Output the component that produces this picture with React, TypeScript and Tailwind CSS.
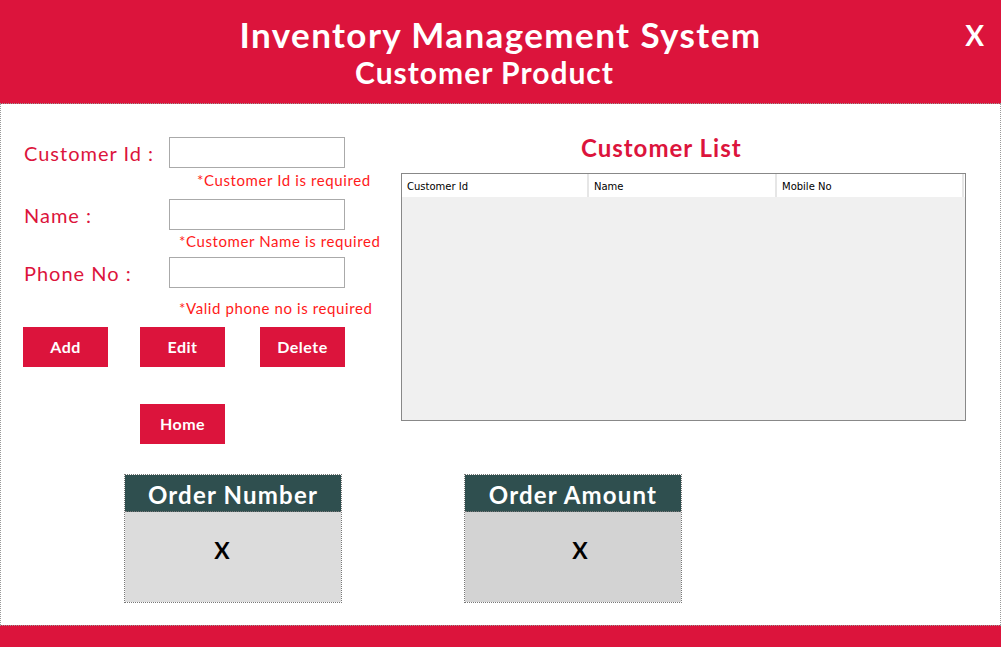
import React from 'react';

const font = { fontFamily: '"Lato", "DejaVu Sans", sans-serif' };

// --- small pieces ---
const Field = ({ label, top }: { label: string; top: string }) => (
  <div className={`flex items-center ${top}`}>
    <label className="w-[168px] pl-[23px] text-[20px] tracking-[1px] text-[#dc143c] whitespace-nowrap">{label}</label>
    <input className="w-[176px] h-[31px] border border-[#aaaaaa] bg-white outline-none" />
  </div>
);

const RedButton = ({ children, className = '' }: { children: React.ReactNode; className?: string }) => (
  <button className={`w-[85px] h-[40px] bg-[#dc143c] text-white font-bold text-[16px] tracking-[0.5px] ${className}`}>
    {children}
  </button>
);

const OrderCard = ({ title, bg, shift }: { title: string; bg: string; shift: string }) => (
  <div className="w-[218px] border border-dotted border-[#777]">
    <div className="h-[37px] bg-[#2f4f4f] text-white font-bold text-[24px] tracking-[1.2px] flex items-center justify-center pt-[3px] border-b border-dotted border-[#777]">
      {title}
    </div>
    <div className={`h-[90px] ${bg} flex items-center justify-center ${shift} pb-[14px] text-[23px] font-bold text-black`}>X</div>
  </div>
);

export default function App() {
  return (
    <div className="w-[1001px] h-[647px] bg-white flex flex-col overflow-hidden" style={font}>
      {/* header */}
      <div className="relative h-[104px] bg-[#dc143c] border-b border-dotted border-[#999] text-white flex flex-col items-center">
        <h1 className="mt-[14px] text-[35px] tracking-[1.4px] font-bold leading-[40px]">Inventory Management System</h1>
        <h2 className="mr-[32px] text-[30px] tracking-[1px] font-bold leading-[36px]">Customer Product</h2>
        <span className="absolute right-[17px] top-[14px] text-[28px] font-bold">X</span>
      </div>

      {/* body */}
      <div className="flex-1 flex flex-col border-x border-dotted border-[#999]">
        <div className="flex">
          {/* left: form */}
          <div className="w-[400px] flex flex-col">
            <Field label="Customer Id :" top="mt-[33px]" />
            <p className="ml-[196px] mt-[2px] text-[15px] tracking-[0.6px] leading-[20px] text-[#ff1a1a]">*Customer Id is required</p>
            <Field label="Name :" top="mt-[9px]" />
            <p className="ml-[178px] mt-[1px] text-[15px] tracking-[0.6px] leading-[20px] text-[#ff1a1a]">*Customer Name is required</p>
            <Field label="Phone No :" top="mt-[6px]" />
            <p className="ml-[178px] mt-[10px] text-[15px] tracking-[0.6px] leading-[20px] text-[#ff1a1a]">*Valid phone no is required</p>
            <div className="flex mt-[9px] pl-[22px]">
              <RedButton>Add</RedButton>
              <RedButton className="ml-[32px]">Edit</RedButton>
              <RedButton className="ml-[35px]">Delete</RedButton>
            </div>
            <div className="mt-[37px] pl-[139px]">
              <RedButton>Home</RedButton>
            </div>
          </div>

          {/* right: customer list */}
          <div className="flex flex-col">
            <h3 className="mt-[29px] ml-[180px] text-[24px] tracking-[1px] font-bold text-[#dc143c] leading-[30px]">
              Customer List
            </h3>
            <div className="mt-[10px] w-[565px] h-[248px] border border-[#888] bg-[#f0f0f0]">
              <div
                className="flex h-[23px] bg-white text-[10px] text-black"
                style={{ fontFamily: '"DejaVu Sans", sans-serif' }}
              >
                <div className="w-[187px] border-r-2 border-[#e6e6e6] flex items-center pl-[5px] pt-[2px]">Customer Id</div>
                <div className="w-[188px] border-r-2 border-[#e6e6e6] flex items-center pl-[5px] pt-[2px]">Name</div>
                <div className="w-[187px] border-r-2 border-[#e6e6e6] flex items-center pl-[5px] pt-[2px]">Mobile No</div>
              </div>
            </div>
          </div>
        </div>

        {/* order summary */}
        <div className="flex mt-[30px] pl-[123px] gap-[122px]">
          <OrderCard title="Order Number" bg="bg-[#dcdcdc]" shift="pr-[22px]" />
          <OrderCard title="Order Amount" bg="bg-[#d3d3d3]" shift="pl-[14px]" />
        </div>
      </div>

      {/* footer */}
      <div className="h-[22px] bg-[#dc143c] border-t border-dotted border-[#999]" />
    </div>
  );
}
